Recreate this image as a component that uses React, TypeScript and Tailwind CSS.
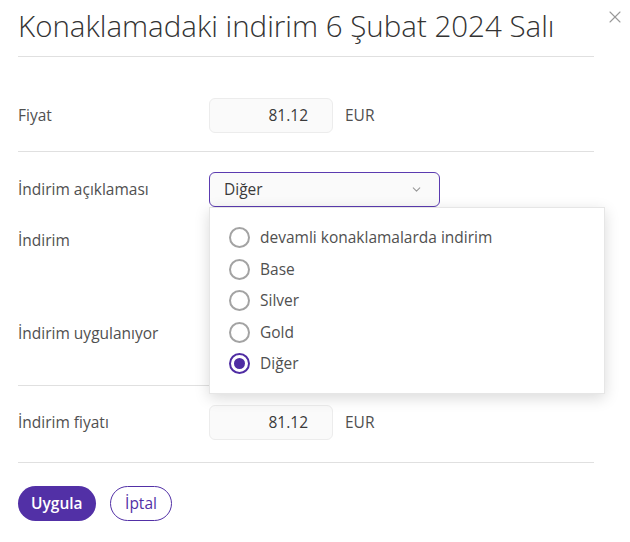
import { ChevronDown, X } from "lucide-react";

const options = ["devamli konaklamalarda indirim", "Base", "Silver", "Gold", "Diğer"];

function AmountBox({ value }: { value: string }) {
  return (
    <div className="flex items-center gap-3">
      <div className="w-[124px] h-[35px] rounded-md border border-[#ececec] bg-[#fafafa] flex items-center justify-end pr-6 text-[15.5px] text-[#3a3a3a]">
        {value}
      </div>
      <span className="text-[15.5px]">EUR</span>
    </div>
  );
}

function Radio({ checked }: { checked: boolean }) {
  return (
    <span
      className={
        checked
          ? "w-[21px] h-[21px] rounded-full border-2 border-[#4f2ca3] flex items-center justify-center"
          : "w-[21px] h-[21px] rounded-full border-2 border-[#a3a3a3]"
      }
    >
      {checked && <span className="w-[11px] h-[11px] rounded-full bg-[#4f2ca3]" />}
    </span>
  );
}

export default function App() {
  return (
    <div
      className="w-[630px] h-[542px] bg-white relative px-[18px] text-[#505050]"
      style={{ fontFamily: "'Open Sans', 'Noto Sans', sans-serif" }}
    >
      {/* Header */}
      <div className="pt-[7px] pb-[11px] border-b border-[#e0e0e0] mr-[18px]">
        <h1 className="text-[29.5px] font-light text-[#333] leading-[38px]">
          Konaklamadaki indirim 6 Şubat 2024 Salı
        </h1>
      </div>
      <button className="absolute left-[605px] top-[7px] text-[#999]" aria-label="Kapat">
        <X size={20} strokeWidth={1.3} />
      </button>

      {/* Fiyat */}
      <div className="flex items-center pt-[41px] pb-[18px] border-b border-[#e0e0e0] mr-[18px]">
        <div className="w-[191px] text-[15.5px]">Fiyat</div>
        <AmountBox value="81.12" />
      </div>

      {/* İndirim */}
      <div className="pt-[20px] pb-[20px] border-b border-[#e0e0e0] mr-[18px] h-[234px]">
        <div className="flex items-center">
          <div className="w-[191px] text-[15.5px]">İndirim açıklaması</div>
          <div className="relative">
            <div className="w-[231px] h-[35px] rounded-md border border-[#5b3bb0] bg-[#fafafa] flex items-center justify-between pl-[14px] pr-[16px] text-[15.5px] text-[#3a3a3a]">
              <span>Diğer</span>
              <ChevronDown size={13} className="text-[#999]" />
            </div>
            {/* Dropdown */}
            <div className="absolute left-0 top-[35px] w-[396px] bg-white border border-[#e6e6e6] shadow-[0_4px_14px_rgba(0,0,0,0.15)] z-10 pt-[19px] pb-[19px] pl-[19px] flex flex-col gap-[10.5px]">
              {options.map((o) => (
                <label key={o} className="flex items-center gap-[10px] text-[15.5px] leading-[21px]">
                  <Radio checked={o === "Diğer"} />
                  <span>{o}</span>
                </label>
              ))}
            </div>
          </div>
        </div>
        <div className="text-[15.5px] mt-[22px]">İndirim</div>
        <div className="text-[15.5px] mt-[70px]">İndirim uygulanıyor</div>
      </div>

      {/* İndirim fiyatı */}
      <div className="flex items-center pt-[19px] pb-[22px] border-b border-[#e0e0e0] mr-[18px]">
        <div className="w-[191px] text-[15.5px]">İndirim fiyatı</div>
        <AmountBox value="81.12" />
      </div>

      {/* Actions */}
      <div className="flex items-center gap-[14px] pt-[23px]">
        <button className="h-[35px] px-[13px] rounded-full bg-[#5230a6] text-white text-[15.5px] font-semibold">
          Uygula
        </button>
        <button className="h-[35px] px-[14.5px] rounded-full border border-[#5230a6] text-[#5230a6] text-[15.5px]">
          İptal
        </button>
      </div>
    </div>
  );
}
